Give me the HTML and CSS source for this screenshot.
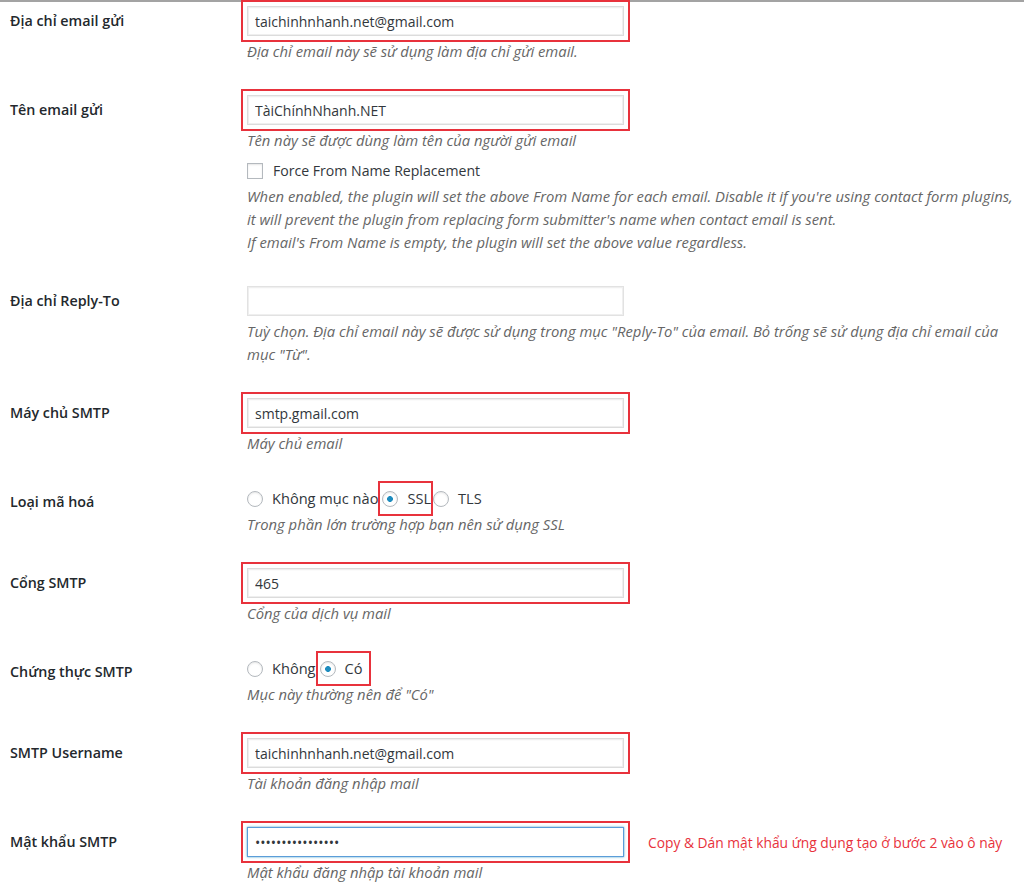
FILE: index.html
```html
<!DOCTYPE html>
<html lang="vi">
<head>
<meta charset="utf-8">
<title>SMTP settings</title>
<link rel="stylesheet" href="styles.css">
</head>
<body>
<div class="page">
  <div class="row first">
    <div class="th">Địa chỉ email gửi</div>
    <div class="td">
      <input class="text hl" type="text" value="taichinhnhanh.net@gmail.com">
      <p class="desc">Địa chỉ email này sẽ sử dụng làm địa chỉ gửi email.</p>
    </div>
  </div>

  <div class="row">
    <div class="th">Tên email gửi</div>
    <div class="td">
      <input class="text hl" type="text" value="TàiChínhNhanh.NET">
      <p class="desc">Tên này sẽ được dùng làm tên của người gửi email</p>
      <label class="check-line"><input class="check" type="checkbox">Force From Name Replacement</label>
      <p class="desc after-check">When enabled, the plugin will set the above From Name for each email. Disable it if you're using contact form plugins,<br>it will prevent the plugin from replacing form submitter's name when contact email is sent.<br>If email's From Name is empty, the plugin will set the above value regardless.</p>
    </div>
  </div>

  <div class="row">
    <div class="th">Địa chỉ Reply-To</div>
    <div class="td">
      <input class="text plain" type="text" value="">
      <p class="desc">Tuỳ chọn. Địa chỉ email này sẽ được sử dụng trong mục "Reply-To" của email. Bỏ trống sẽ sử dụng địa chỉ email của<br>mục "Từ".</p>
    </div>
  </div>

  <div class="row">
    <div class="th">Máy chủ SMTP</div>
    <div class="td">
      <input class="text hl" type="text" value="smtp.gmail.com">
      <p class="desc">Máy chủ email</p>
    </div>
  </div>

  <div class="row">
    <div class="th">Loại mã hoá</div>
    <div class="td">
      <div class="radios">
        <label class="opt"><input class="radio" type="radio" name="enc">Không mục nào</label><label class="opt mark mark-ssl"><input class="radio" type="radio" name="enc" checked>SSL</label><label class="opt"><input class="radio" type="radio" name="enc">TLS</label>
      </div>
      <p class="desc after-check">Trong phần lớn trường hợp bạn nên sử dụng SSL</p>
    </div>
  </div>

  <div class="row">
    <div class="th">Cổng SMTP</div>
    <div class="td">
      <input class="text hl" type="text" value="465">
      <p class="desc">Cổng của dịch vụ mail</p>
    </div>
  </div>

  <div class="row">
    <div class="th">Chứng thực SMTP</div>
    <div class="td">
      <div class="radios">
        <label class="opt"><input class="radio" type="radio" name="auth">Không</label><label class="opt mark mark-co"><input class="radio" type="radio" name="auth" checked>Có</label>
      </div>
      <p class="desc after-check">Mục này thường nên để "Có"</p>
    </div>
  </div>

  <div class="row">
    <div class="th">SMTP Username</div>
    <div class="td">
      <input class="text hl" type="text" value="taichinhnhanh.net@gmail.com">
      <p class="desc">Tài khoản đăng nhập mail</p>
    </div>
  </div>

  <div class="row">
    <div class="th">Mật khẩu SMTP</div>
    <div class="td">
      <div class="pw-line">
        <input class="text hl focus" type="password" value="0123456789abcdef">
        <span class="note">Copy &amp; Dán mật khẩu ứng dụng tạo ở bước 2 vào ô này</span>
      </div>
      <p class="desc">Mật khẩu đăng nhập tài khoản mail</p>
    </div>
  </div>
</div>
</body>
</html>
```
FILE: styles.css
```css
html, body {
  margin: 0;
  padding: 0;
  background: #fff;
}
body {
  font-family: "Open Sans", "Noto Sans", "DejaVu Sans", sans-serif;
  font-size: 14px;
  color: #32373c;
  overflow: hidden;
}
.page {
  border-top: 2px solid #a3a3a3;
  padding-top: 4px;
}
.row {
  display: grid;
  grid-template-columns: 237px 1fr;
  padding-left: 10px;
  margin-top: 32px;
}
.row.first {
  margin-top: 0;
}
.th {
  font-size: 14.3px;
  font-weight: 600;
  color: #23282d;
  line-height: 30px;
}
.td {
  min-width: 0;
}
.text {
  display: block;
  box-sizing: border-box;
  width: 377px;
  height: 30px;
  margin: 0;
  padding: 2px 7px;
  border: 1px solid #dcdcdc;
  box-shadow: inset 0 0 0 1px #efefef, inset 0 1px 2px rgba(0,0,0,.07);
  background: #fff;
  font-family: inherit;
  font-size: 14px;
  color: #32373c;
  outline: none;
}
.text.plain {
  border-color: #e2e2e2;
}
.text.hl {
  outline: 2px solid #e8323c;
  outline-offset: 4px;
}
.text.focus {
  border-color: #5b9dd9;
  box-shadow: 0 0 2px rgba(30,140,190,.8);
}
.desc {
  margin: 4px 0 0;
  line-height: 23px;
  font-size: 14.8px;
  font-style: italic;
  color: #666;
}
.desc.after-check {
  margin-top: 3px;
}
.check-line {
  display: flex;
  align-items: center;
  margin-top: 7px;
  line-height: 23px;
  font-size: 14.1px;
}
.check {
  -webkit-appearance: none;
  appearance: none;
  width: 16px;
  height: 16px;
  margin: 0 10px 0 0;
  border: 1px solid #b4b9be;
  box-shadow: inset 0 1px 2px rgba(0,0,0,.1);
  background: #fff;
}
.radios {
  line-height: 23px;
  height: 23px;
  white-space: nowrap;
  font-size: 14.6px;
}
.opt {
  display: inline-block;
  vertical-align: top;
  margin-right: 4px;
}
.radio {
  -webkit-appearance: none;
  appearance: none;
  width: 16px;
  height: 16px;
  margin: 0 9px 0 0;
  vertical-align: -3px;
  border: 1px solid #b4b9be;
  border-radius: 50%;
  box-shadow: inset 0 1px 2px rgba(0,0,0,.1);
  background: #fff;
}
.radio:checked {
  background: radial-gradient(circle, #1e8cbe 0 2.6px, #fff 3.2px);
}
.mark {
  outline: 2px solid #e8323c;
  padding: 4px 0 4px 2px;
  margin: -4px 0 -4px -2px;
}
.mark-ssl {
  margin-right: 2px;
}
.mark-co {
  padding-right: 6px;
}
.pw-line {
  display: flex;
  align-items: center;
}
.note {
  margin-left: 24px;
  font-size: 13.8px;
  color: #e8323c;
  white-space: nowrap;
}
```
